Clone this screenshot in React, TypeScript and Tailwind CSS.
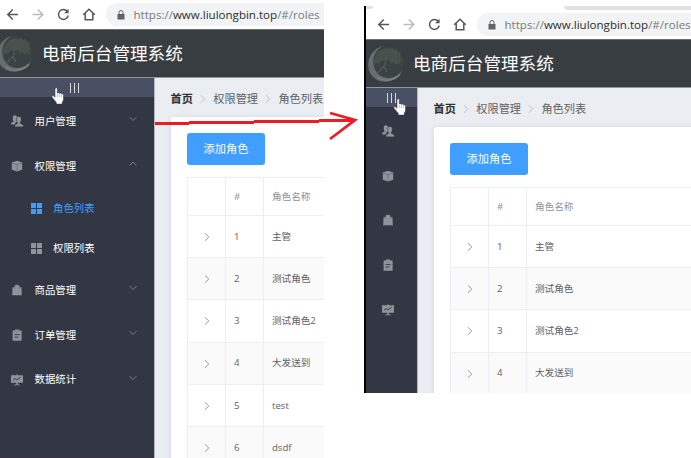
import React from "react";

type MenuIcon = "users" | "box" | "bag" | "clip" | "chart";

const menus: { icon: MenuIcon; label: string; children?: string[] }[] = [
  { icon: "users", label: "用户管理" },
  { icon: "box", label: "权限管理", children: ["角色列表", "权限列表"] },
  { icon: "bag", label: "商品管理" },
  { icon: "clip", label: "订单管理" },
  { icon: "chart", label: "数据统计" },
];

const roles = ["主管", "测试角色", "测试角色2", "大发送到", "test", "dsdf"];

function Glyph({ name }: { name: MenuIcon }) {
  return (
    <svg viewBox="0 0 14 14" className="h-[14px] w-[14px] shrink-0" fill="#909399">
      {name === "users" && (
        <>
          <path d="M4.800 1.300c1.300 0 2.200.8 2.200 2-.9.9-.9 2.700.1 3.900L5.400 8.600l-.6 1.800H1.200V8.800L3.700 7.400C2.200 5.200 2.400 1.300 4.800 1.300z" />
          <path d="M8.800 2.600c2.700 0 3 3.800 1.500 5.700v1.200l3 1.400v1.900H5v-1.900l2.500-1.300V8.400C5.900 6.600 6.100 2.600 8.800 2.600z" stroke="#333744" strokeWidth=".3" />
        </>
      )}
      {name === "box" && (
        <>
          <path d="M7 1.800 12.200 3.600V10.800L7 12.600 1.800 10.800V3.600z" />
          <path d="M2.200 4.100 7 5.700l4.800-1.600M7 5.700v6.700" fill="none" stroke="#5d616c" strokeWidth=".6" />
        </>
      )}
      {name === "bag" && (
        <>
          <path d="M2.600 4.200h8.800l.5 8H2.100z" />
          <path d="M4.900 5V3.600q0-1.400 1.300-1.400h1.700q1.300 0 1.300 1.400V5" fill="#909399" stroke="#909399" strokeWidth=".8" />
          <path d="M4.900 4.500v1.300M9.200 4.500v1.300" stroke="#5d616c" strokeWidth=".8" />
        </>
      )}
      {name === "clip" && (
        <>
          <path d="M2.600 2.600H5V1.500h4v1.100h2.600v10.100H2.600z" />
          <path d="M4.600 6.600h5M4.600 9.100h3.700" stroke="#333744" strokeWidth=".9" />
          <path d="M4.800 3.900h4.500" stroke="#7b7e87" strokeWidth=".6" />
        </>
      )}
      {name === "chart" && (
        <>
          <path d="M1 2.300h5.300v-.8h1.400v.8H13v7.500H7.800v1.300l2 1-.4.7L7 11.700l-2.400 1.100-.4-.7 2-1V9.800H1z" />
          <path d="M3 7.300 5.300 5.600l1.500 1.300 3.800-2.700" fill="none" stroke="#333744" strokeWidth="1" />
        </>
      )}
    </svg>
  );
}

function Chevron({ up, className = "" }: { up?: boolean; className?: string }) {
  return (
    <svg viewBox="0 0 8 8" className={`h-2 w-2 shrink-0 ${className}`} fill="none" stroke="#80838b" strokeWidth=".9">
      <path d={up ? "M.5 5.500 4 2l3.500 3.500" : "M.5 2 4 5.500 7.500 2"} />
    </svg>
  );
}

function RightChevron({ color, className = "" }: { color: string; className?: string }) {
  return (
    <svg viewBox="0 0 8 10" className={`h-[10px] w-2 shrink-0 ${className}`} fill="none" stroke={color} strokeWidth="1">
      <path d="M2 1.300 5.800 5 2 8.700" />
    </svg>
  );
}

function Toolbar() {
  return (
    <div className="flex h-[29px] w-[420px] shrink-0 items-center bg-white">
      <svg viewBox="0 0 104 29" className="h-[29px] w-[104px] shrink-0" fill="none" stroke="#55585c" strokeWidth="1.500">
        <path d="M18 14.500H8M12.800 9.500l-5 5 5 5" />
        <path d="M32.500 14.500h10M37.800 9.500l5 5-5 5" stroke="#b9bbbe" />
        <path d="M67.300 11.500A4.900 4.900 0 1 0 68.200 15.500" />
        <path d="M68.600 8.800v4.500h-4.500z" fill="#55585c" stroke="none" />
        <path d="M83.200 14.700 89 9.200l5.800 5.500M85.200 13.500v6.200h7.600v-6.200" />
      </svg>
      <div className="ml-[2px] flex h-[23px] grow items-center rounded-l-full bg-[#f1f3f4]">
        <svg viewBox="0 0 8 10" className="ml-[11px] h-[10px] w-2" fill="#5f6368">
          <path d="M.5 4h7v5.500h-7z" />
          <path d="M2 4V2.500a2 2 0 0 1 4 0V4" fill="none" stroke="#5f6368" />
        </svg>
        <span className="ml-[8.500px] font-['Open_Sans','Noto_Sans',sans-serif] text-[11.550px] leading-none whitespace-nowrap text-[#777b80]">
          https://<span className="text-[#2b2d30]">www.liulongbin.top</span>/#/roles
        </span>
      </div>
    </div>
  );
}

function Header({ className = "" }: { className?: string }) {
  return (
    <div className={`flex h-[49px] w-[420px] shrink-0 items-center border-t border-b border-t-[#6b6f72] border-b-[#92969a] bg-[#373d41] ${className}`}>
      <svg viewBox="0 0 36 44" className="h-[44px] w-9 shrink-0 overflow-visible" fill="none">
        <circle cx="16" cy="21.500" r="16.500" fill="#3b4243" />
        <path d="M3 19c1-7 6-12 13-13l3 1 2-1 2 2 3-1 1 3 3 1-1 3 2 3-2 2 1 4-3-2-2 2-2-3-3 2-2-4-4 2-3-2-3 4-3-1-2 3z" fill="#48514c" />
        <path d="M14 20c1 3-1 5-3 6l-4 5M12 25l3 2v3" stroke="#60676a" strokeWidth="1" />
        <path d="M13 3.500C-5 8-7 29 4 36.500c9 6.500 24 3 28-10-4 9-15 12-23 7C-1 26 0 9 13 3.500z" fill="#666c6f" />
        <path d="M6 35c7 5 18 4 23-3" stroke="#7c8183" strokeWidth="1.500" />
      </svg>
      <span className="ml-[6px] text-[17.600px] leading-none whitespace-nowrap text-white">电商后台管理系统</span>
    </div>
  );
}

function Sidebar({ collapsed }: { collapsed?: boolean }) {
  return (
    <div className={`flex shrink-0 flex-col border-r border-r-[#b5b8c0] bg-[#333744] ${collapsed ? "w-[52px]" : "w-[155px]"}`}>
      <div className={`flex h-[19px] shrink-0 items-center justify-center gap-[3px] bg-[#4a5064] ${collapsed ? "" : "pr-[5px]"}`}>
        {[0, 1, 2].map((bar) => (
          <i key={bar} className="h-[10px] w-px bg-[#d8dae0]" />
        ))}
      </div>
      <div className="pt-[2px]">
        {menus.map((menu) => (
          <div key={menu.label}>
            <div className={`flex h-[44.600px] items-center ${collapsed ? "pl-[15px]" : "pr-[17px] pl-[10px]"}`}>
              <Glyph name={menu.icon} />
              {!collapsed && (
                <>
                  <span className="ml-[10.500px] grow text-[10.400px] leading-none text-white">{menu.label}</span>
                  <Chevron up={!!menu.children} className="relative -top-[2px]" />
                </>
              )}
            </div>
            {!collapsed &&
              menu.children?.map((child, i) => (
                <div key={child} className={`flex h-[40px] items-center pt-px pl-[31px] ${i === 0 ? "text-[#409eff]" : "text-white"}`}>
                  <span className={`grid grid-cols-2 gap-px ${i === 0 ? "text-[#409eff]" : "text-[#909399]"}`}>
                    {[0, 1, 2, 3].map((n) => (
                      <i key={n} className="h-[5px] w-[5px] bg-current" />
                    ))}
                  </span>
                  <span className="ml-[11px] text-[10.400px] leading-none">{child}</span>
                </div>
              ))}
          </div>
        ))}
      </div>
      {!collapsed && <div className="mt-auto h-px bg-[#3c2f42]" />}
    </div>
  );
}

function Content({ rows }: { rows: number }) {
  return (
    <div className="w-[290px] shrink-0 bg-[#eaedf1] pl-4">
      <div className="flex h-[39px] items-center pt-[3px] text-[11.200px] leading-none whitespace-nowrap text-[#606266]">
        <b className="-ml-[.5px] font-bold text-[#303133]">首页</b>
        <RightChevron color="#c0c4cc" className="mx-[6.200px]" />
        <span>权限管理</span>
        <RightChevron color="#c0c4cc" className="mx-[6.200px]" />
        <span>角色列表</span>
      </div>
      <div className="h-[420px] w-[280px] rounded-[3px] bg-white pt-4 pl-4 shadow-[0_1px_6px_rgba(0,0,0,.1)]">
        <button className="flex h-8 w-[78px] items-center justify-center rounded-[3px] bg-[#409eff] text-[11.200px] leading-none text-white">
          添加角色
        </button>
        <div className="mt-3 w-[260px] border-t border-l border-[#ebeef5] text-[9.600px] leading-none text-[#606266]">
          <div className="flex h-[38px] border-b border-[#ebeef5] text-[#909399]">
            <div className="w-[38px] border-r border-[#ebeef5]" />
            <div className="flex w-[38px] items-center border-r border-[#ebeef5] pl-2">#</div>
            <div className="flex items-center pl-2">角色名称</div>
          </div>
          {roles.slice(0, rows).map((role, i) => (
            <div key={role} className={`flex h-[42.200px] border-b border-[#ebeef5] ${i % 2 ? "bg-[#fafafa]" : "bg-white"}`}>
              <div className="flex w-[38px] items-center justify-center border-r border-[#ebeef5] pt-px pl-px">
                <RightChevron color="#96999f" />
              </div>
              <div className="flex w-[38px] items-center border-r border-[#ebeef5] pl-2">{i + 1}</div>
              <div className="flex items-center pl-2">{role}</div>
            </div>
          ))}
        </div>
      </div>
    </div>
  );
}

function Hand({ className }: { className: string }) {
  return (
    <svg viewBox="0 0 14 18" className={`absolute h-[18px] w-[14px] ${className}`}>
      <path
        d="M4 1.500q1.500-1.500 2.300.3V6q1.200-.9 2.100.4 1.200-.8 2.100.6 1.700-.6 2 1V12q0 1.800-1.300 3.200v1.900H5.300v-1.700L1 10.200q-.8-1.600.8-1.600.9 0 2.200 1.700z"
        fill="white"
        stroke="#2f3340"
        strokeWidth=".5"
      />
      <path d="M6.300 7v3M8.400 7.500v2.500M10.500 8v2" stroke="#7b7e88" strokeWidth=".5" />
    </svg>
  );
}

export default function App() {
  return (
    <div className="relative flex h-[458px] w-[691px] overflow-hidden bg-white font-['Open_Sans','Noto_Sans_CJK_SC',sans-serif]">
      <section className="flex h-[458px] w-[324px] shrink-0 flex-col overflow-hidden">
        <Toolbar />
        <Header />
        <div className="flex min-h-0 grow">
          <Sidebar />
          <Content rows={6} />
        </div>
      </section>
      <section className="mt-[6px] ml-10 flex h-[387px] w-[327px] shrink-0 flex-col overflow-hidden border-l-2 border-black">
        <div className="flex h-1 shrink-0 justify-between">
          <i className="h-[3px] w-[7px] rounded-br-md bg-[#dee1e6]" />
          <i className="h-1 w-[127px] rounded-bl-md bg-[#dee1e6]" />
        </div>
        <div className="pl-[5px]">
          <Toolbar />
        </div>
        <Header className="pl-[5px]" />
        <div className="flex min-h-0 grow">
          <Sidebar collapsed />
          <Content rows={4} />
        </div>
      </section>
      <svg viewBox="0 0 210 60" className="absolute top-[90px] left-[150px] h-[60px] w-[210px]" fill="none" stroke="#ed1c24" strokeWidth="2.800">
        <path d="M5 33.500h34M39 32.500h65M104 31.500h65M169 30.500h36" />
        <path d="M180 23 205 30 180 49" />
      </svg>
      <Hand className="top-[87px] left-[51px]" />
      <Hand className="top-[98px] left-[393px]" />
    </div>
  );
}
